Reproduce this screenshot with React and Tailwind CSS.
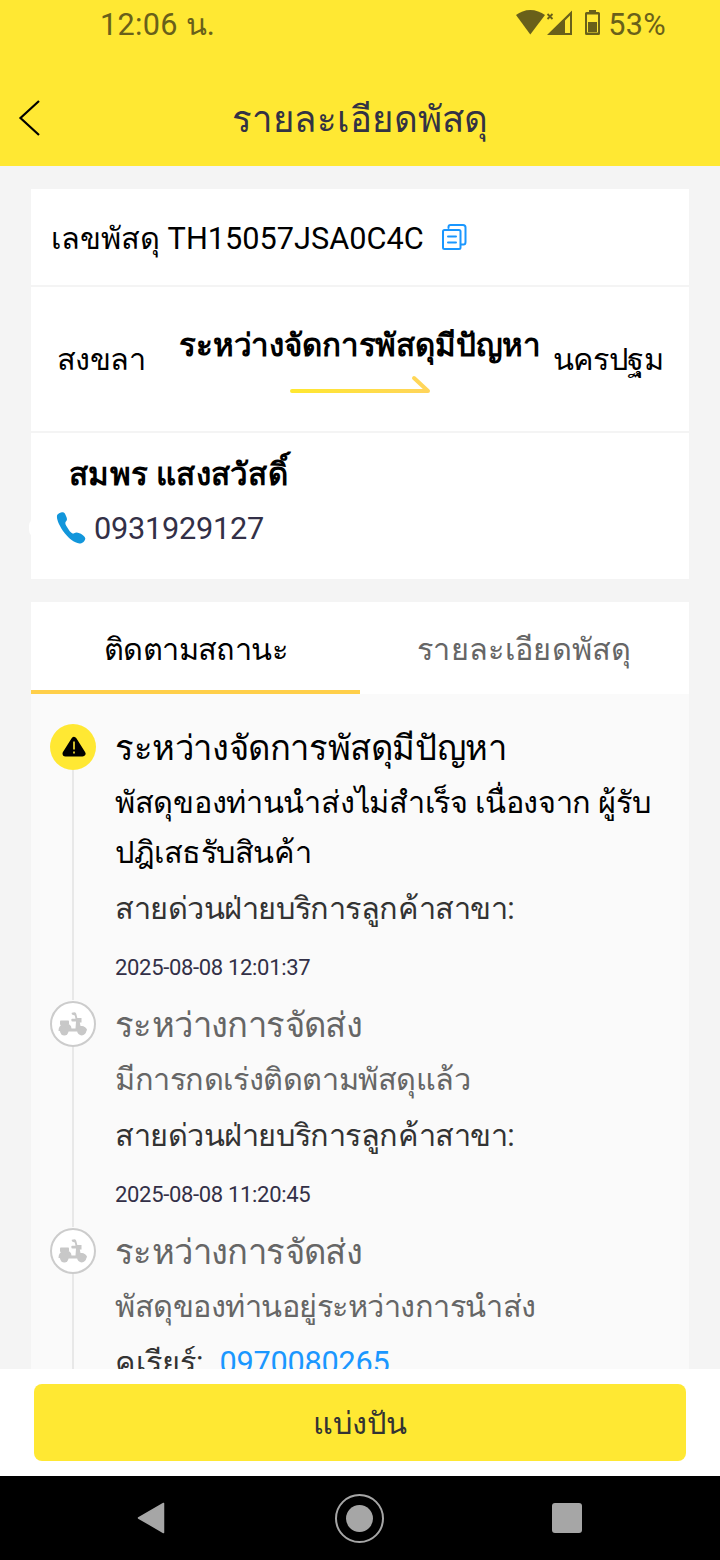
function StatusBar() {
  return (
    <div className="flex h-[72px] items-start justify-between pl-[100px] pr-[54px] text-[#69601a]">
      <div className="h-[50px] text-[30.6px] leading-[50px] tracking-[0.3px]">12:06 น.</div>
      <div className="flex h-[50px] items-center">
        <svg className="h-[50px] w-[92px]" viewBox="0 0 92 50" fill="currentColor">
          <path d="M0 15C4 12 9 10 14.300 10S25 12 29 15L14.300 34.500Z" />
          <path d="M31.500 14L36.500 19M36.500 14L31.500 19" stroke="currentColor" strokeWidth="1.800" />
          <path fillRule="evenodd" d="M31 35L56 10.500V35ZM49 20.500V33H54V15.500Z" />
          <path fillRule="evenodd" d="M73 10H80V12H82.500Q84 12 84 13.500V33.500Q84 35 82.500 35H70.500Q69 35 69 33.500V13.500Q69 12 70.500 12H73ZM71 14.500V32.500H82V14.500Z" />
          <rect x="72" y="22" width="9" height="10" />
        </svg>
        <span className="text-[30.6px] leading-[50px] tracking-[0.3px]">53%</span>
      </div>
    </div>
  );
}

function TitleBar() {
  return (
    <div className="grid h-[94px] grid-cols-[60px_1fr_60px] items-center">
      <svg className="mb-[2px] h-[38px] w-[60px]" viewBox="0 0 60 38" fill="none" stroke="#000" strokeWidth="2.200">
        <path d="M39 2L20.500 19L39 36" />
      </svg>
      <h1 className="pt-[2px] text-center text-[36.6px] leading-[50px] tracking-[0.25px] text-[#333244]">รายละเอียดพัสดุ</h1>
    </div>
  );
}

function CopyIcon() {
  return (
    <svg className="ml-[17px] h-[28px] w-[28px]" viewBox="0 0 28 28" fill="none" stroke="#1a97ff" strokeWidth="2" strokeLinecap="round" strokeLinejoin="round">
      <path d="M7.500 5V4Q7.500 2 9.500 2H22Q24.500 2 24.500 4.500V19Q24.500 21.500 22.500 21.500H20" />
      <rect x="2" y="7" width="17.500" height="19" rx="1.500" />
      <path d="M7 13.500H15M7 19.500H15" />
    </svg>
  );
}

function ShipmentCard() {
  return (
    <section className="h-[390px] bg-white text-[30.7px] leading-[50px] text-black">
      <div className="flex h-[98px] items-center border-b-2 border-[#f4f4f4] pl-[20px]">
        <span className="pt-[3px]">เลขพัสดุ TH15057JSA0C4C</span>
        <CopyIcon />
      </div>
      <div className="flex h-[146px] border-b-2 border-[#f4f4f4] pl-[26px] pr-[26px] pt-[34px]">
        <span className="w-[122px] pt-[14px] tracking-[-0.6px]">สงขลา</span>
        <div className="flex flex-col items-center">
          <b className="text-[31.3px] leading-[50px] tracking-[-0.15px]">ระหว่างจัดการพัสดุมีปัญหา</b>
          <svg className="mt-[2px] h-[24px] w-[144px]" viewBox="0 0 144 24" fill="none" stroke="url(#route)" strokeWidth="4" strokeLinecap="round" strokeLinejoin="round">
            <defs>
              <linearGradient id="route" gradientUnits="userSpaceOnUse" x1="0" y1="0" x2="144" y2="0">
                <stop offset="0" stopColor="#ffe82f" />
                <stop offset="1" stopColor="#ffd45c" />
              </linearGradient>
            </defs>
            <path d="M4 18H140L126 5" />
          </svg>
        </div>
        <span className="ml-auto pt-[14px] tracking-[-0.6px]">นครปฐม</span>
      </div>
      <div className="pt-[17px]">
        <b className="block pl-[38px] text-[31.3px] leading-[50px] tracking-[0.25px]">สมพร แสงสวัสดิ์</b>
        <div className="relative mt-[4px] flex items-center pl-[25px] text-[#333047]">
          <span className="absolute -left-[2px] top-[14px] h-[20px] w-[8px] rounded-l-full bg-white" />
          <svg className="mb-[2px] h-[34px] w-[31px]" viewBox="0 0 31 34" fill="#1296db">
            <path d="M5 1.500C8 .500 9 2 10 5C11.500 8 11.300 9.500 9.500 11C9 12.500 9.500 13.500 11 16C13 19.500 14.500 21.500 16.500 22.500C18 23 18.500 21.500 20.500 21.500C24 21.500 29.500 25.500 29.300 27.500C29 30.500 26 32.500 23.500 32.500C18.500 32 12 27 7 20C2.500 13 .500 8 1 4.500C1.500 3 3 2 5 1.500Z" />
          </svg>
          <span className="ml-[7px] tracking-[-0.25px]">0931929127</span>
        </div>
      </div>
    </section>
  );
}

function Scooter() {
  return (
    <svg className="h-[26px] w-[30px]" viewBox="0 0 30 26" fill="#c8c8c8">
      <rect x="2" y="9.500" width="9" height="4.500" rx="0.800" />
      <path d="M.500 20Q.500 15 4 13.500H11.500Q13.500 15 13.500 17.500H17.500L18 10.500H14.500Q13.300 10.500 13.300 9T14.500 7.800H17.500L16.800 4.500L14.500 3.800Q13.300 3 13.800 1.800L16.500 1.200Q18 1.500 18.300 3L19.300 7H23.500V11.500H21.800L22.500 15Q27 14.500 29 18.500L28.300 20.500H10Z" />
      <circle cx="6.300" cy="20.300" r="4.200" />
      <circle cx="23.700" cy="19.900" r="4.500" />
    </svg>
  );
}

function Warning() {
  return (
    <svg className="ml-[2px] h-[22px] w-[24px]" viewBox="0 0 24 22">
      <path d="M12 4L20.500 17.500H3.500Z" fill="#000" stroke="#000" strokeWidth="6" strokeLinejoin="round" />
      <path d="M12 5.500V13.500M12 15.500V17.500" stroke="#ffe833" strokeWidth="1.600" />
    </svg>
  );
}

const items = [
  {
    active: true,
    title: <span className="tracking-[-0.4px]">ระหว่างจัดการพัสดุมีปัญหา</span>,
    lines: [
      <p key="1" className="tracking-[-0.29px]">พัสดุของท่านนำส่งไม่สำเร็จ เนื่องจาก ผู้รับ</p>,
      <p key="2" className="tracking-[-0.45px]">ปฎิเสธรับสินค้า</p>,
    ],
    contact: "สายด่วนฝ่ายบริการลูกค้าสาขา:",
    time: "2025-08-08 12:01:37",
  },
  {
    title: <span className="tracking-[-0.6px]">ระหว่างการจัดส่ง</span>,
    lines: [<p key="1" className="tracking-[-0.42px]">มีการกดเร่งติดตามพัสดุแล้ว</p>],
    contact: "สายด่วนฝ่ายบริการลูกค้าสาขา:",
    time: "2025-08-08 11:20:45",
  },
  {
    title: <span className="tracking-[-0.6px]">ระหว่างการจัดส่ง</span>,
    lines: [<p key="1" className="tracking-[-0.5px]">พัสดุของท่านอยู่ระหว่างการนำส่ง</p>],
    contact: "คูเรียร์:",
    phone: "0970080265",
  },
];

function TimelineItem({ item }) {
  return (
    <li className="flex">
      <div className="flex w-[46px] flex-col items-center pt-px">
        <div
          className={
            item.active
              ? "flex h-[46px] w-[46px] items-center justify-center rounded-full bg-[#ffe833]"
              : "flex h-[46px] w-[46px] items-center justify-center rounded-full border-2 border-[#cccccc] bg-white"
          }
        >
          {item.active ? <Warning /> : <Scooter />}
        </div>
        <div className="w-[2px] flex-1 bg-[#e8e8e8]" />
      </div>
      <div className="ml-[19px] whitespace-nowrap pb-[15px] text-[30.7px] leading-[50px]">
        <h2 className={item.active ? "text-[34.6px] leading-[50px] text-black" : "text-[34.6px] leading-[50px] text-[#666666]"}>
          {item.title}
        </h2>
        <div className={item.active ? "mt-[5px] text-black" : "mt-[5px] text-[#666666]"}>{item.lines}</div>
        <p className="mt-[6px] text-[#333333]">
          <span className={item.phone ? "tracking-normal" : "tracking-[-0.44px]"}>{item.contact}</span>
          {item.phone && <span className="ml-[16px] tracking-[-0.25px] text-[#1a97ff]">{item.phone}</span>}
        </p>
        {item.time && <p className="mt-[17px] text-[22px] leading-[34px] tracking-[-0.32px] text-[#333047]">{item.time}</p>}
      </div>
    </li>
  );
}

function TrackingCard() {
  return (
    <section className="mt-[23px] bg-[#fafafa]">
      <div className="grid h-[92px] grid-cols-2 bg-white text-center text-[30.7px] leading-[50px]">
        <div className="border-b-4 border-[#ffcf4a] pt-[23px] tracking-[-0.6px] text-black">ติดตามสถานะ</div>
        <div className="pt-[23px] tracking-[0.3px] text-[#666666]">รายละเอียดพัสดุ</div>
      </div>
      <ol className="pl-[19px] pt-[29px]">
        {items.map((item, i) => (
          <TimelineItem key={i} item={item} />
        ))}
      </ol>
    </section>
  );
}

function NavBar() {
  return (
    <nav className="grid h-[84px] shrink-0 grid-cols-[302px_116px_302px] items-center justify-items-center bg-black">
      <svg className="h-[32px] w-[30px]" viewBox="0 0 30 32">
        <path d="M2.500 16L27.500 1.500V30.500Z" fill="#a6a6a6" stroke="#a6a6a6" strokeWidth="1.500" strokeLinejoin="round" />
      </svg>
      <div className="mr-px flex h-[49px] w-[49px] items-center justify-center rounded-full border-2 border-[#a6a6a6]">
        <div className="h-[27px] w-[27px] rounded-full bg-[#a6a6a6]" />
      </div>
      <div className="mr-[4px] h-[30px] w-[30px] rounded-[3px] bg-[#a6a6a6]" />
    </nav>
  );
}

export default function App() {
  return (
    <div className="flex h-[1560px] w-[720px] flex-col overflow-hidden bg-[#f4f4f4] font-['Roboto','Noto_Sans',sans-serif]">
      <header className="h-[166px] shrink-0 bg-[#ffe833]">
        <StatusBar />
        <TitleBar />
      </header>
      <main className="min-h-0 flex-1 overflow-hidden px-[31px] pt-[23px]">
        <ShipmentCard />
        <TrackingCard />
      </main>
      <footer className="h-[107px] shrink-0 bg-white px-[34px] pt-[15px]">
        <button className="h-[77px] w-full rounded-lg bg-[#ffe833] pt-[2px] text-[30.7px] leading-[50px] tracking-[-0.2px] text-[#333333]">แบ่งปัน</button>
      </footer>
      <NavBar />
    </div>
  );
}
